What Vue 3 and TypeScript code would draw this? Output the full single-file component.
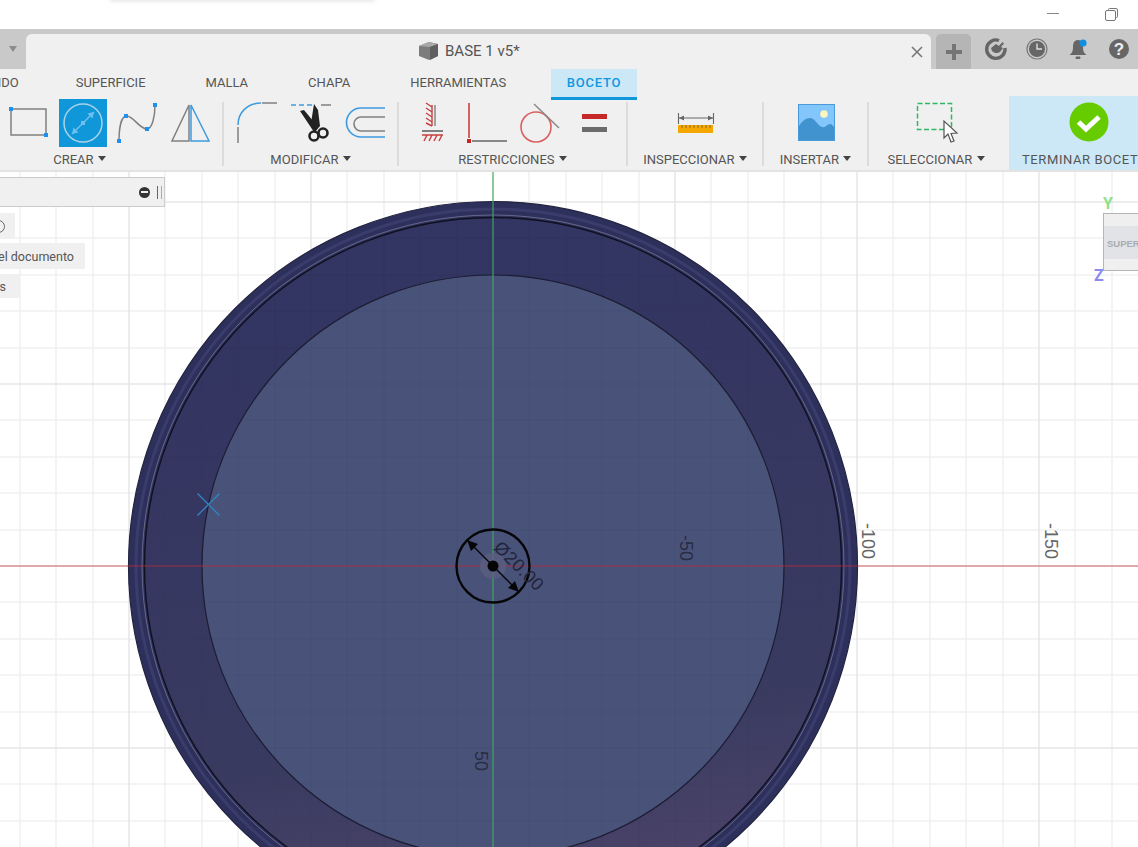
<template>
  <div class="app">
    <header class="titlebar">
      <div class="shadow"></div>
      <div class="win-min"></div>
      <svg class="win-restore" width="13" height="13" viewBox="0 0 13 13">
        <path d="M3.5 2.5 V1.5 a1 1 0 0 1 1-1 H11 a1.5 1.5 0 0 1 1.5 1.5 V8.5 a1 1 0 0 1-1 1 H10.5" fill="none" stroke="#777" />
        <rect x="0.5" y="2.5" width="10" height="10" rx="1.5" fill="#fff" stroke="#777" />
      </svg>
    </header>

    <div class="tabbar">
      <div class="tab-left"><span class="tri"></span></div>
      <div class="doc-tab">
        <svg class="cube" width="20" height="20" viewBox="0 0 20 20">
          <path d="M1 5 L11 1 L20 3 V15 L11 19 L1 15 Z" fill="#7d7d7d" />
          <path d="M1 5 L11 1 L20 3 L12 6 Z" fill="#a8a8a8" />
          <path d="M12 6 L20 3 V15 L12 19 Z" fill="#5f5f5f" />
        </svg>
        <span class="doc-name">BASE 1 v5*</span>
        <svg class="close" width="12" height="12" viewBox="0 0 12 12">
          <path d="M1 1 L11 11 M11 1 L1 11" stroke="#777" stroke-width="1.6" />
        </svg>
      </div>
      <div class="plus">
        <svg width="18" height="18" viewBox="0 0 18 18">
          <path d="M9 1 V17 M1 9 H17" stroke="#757575" stroke-width="4" />
        </svg>
      </div>
      <div class="status-icons">
        <svg width="24" height="24" viewBox="0 0 24 24">
          <path d="M15 3.5 A9.2 9.2 0 1 0 21 11" fill="none" stroke="#666" stroke-width="3.4" />
          <path d="M7 11 L12 7 L15 9 L18.5 5 L20 6.5 L17 10 L19 11 L16 15 C13 17 10 16 8 14 Z" fill="#666" />
        </svg>
        <svg width="24" height="24" viewBox="0 0 24 24">
          <circle cx="12" cy="12" r="10" fill="none" stroke="#777" stroke-width="1.2" />
          <circle cx="12" cy="12" r="8" fill="#666" />
          <path d="M12 6.5 V12 H17" fill="none" stroke="#ddd" stroke-width="1.4" />
        </svg>
        <svg width="24" height="24" viewBox="0 0 24 24">
          <path d="M12 3 C7.5 3 7 7 7 11 C7 14 6 16 3.5 18 H20.5 C18 16 17 14 17 11 C17 7 16.5 3 12 3 Z" fill="#666" />
          <rect x="9.5" y="19.5" width="5" height="2.5" rx="1.2" fill="#666" />
          <circle cx="17" cy="6" r="3.6" fill="#0f8fe0" />
        </svg>
        <svg width="24" height="24" viewBox="0 0 24 24">
          <circle cx="12" cy="12" r="10" fill="#666" />
          <text x="12" y="18" text-anchor="middle" class="help-mark">?</text>
        </svg>
      </div>
    </div>

    <section class="ribbon">
      <nav class="ribbon-tabs">
        <span v-for="t in tabs" :key="t" class="rtab" :class="{ active: t === 'BOCETO' }">{{ t }}</span>
      </nav>
      <div class="tools-row">
        <div class="group g-create">
          <div class="tools tools-start">
            <svg class="tool" viewBox="0 0 48 48"><path d="M8 40 L40 8" stroke="#808080" stroke-width="1.5" /></svg>
            <svg class="tool" viewBox="0 0 48 48">
              <rect x="6" y="10" width="35" height="26" fill="none" stroke="#808080" stroke-width="1.5" />
              <rect x="4" y="8" width="4" height="4" fill="#1e90ee" />
              <rect x="39" y="34" width="4" height="4" fill="#1e90ee" />
            </svg>
            <svg class="tool selected" viewBox="0 0 48 48">
              <circle cx="24" cy="24" r="19" fill="none" stroke="#a9d3e6" stroke-width="1.5" />
              <path d="M13 35 L35 13" stroke="#6fc0ee" stroke-width="1.5" />
              <path d="M35 13 L28.5 14.5 L33.5 19.5 Z M13 35 L19.5 33.5 L14.5 28.5 Z" fill="#6fc0ee" />
              <rect x="22" y="22" width="4" height="4" fill="#6fc0ee" />
            </svg>
            <svg class="tool" viewBox="0 0 48 48">
              <path d="M6 42 C6 30 8 18 13 17 C20 16 26 30 34 30 C39 30 42 18 42 6" fill="none" stroke="#808080" stroke-width="1.5" />
              <rect x="4" y="40" width="4" height="4" fill="#1e90ee" />
              <rect x="11" y="15" width="4" height="4" fill="#1e90ee" />
              <rect x="32" y="28" width="4" height="4" fill="#1e90ee" />
              <rect x="40" y="4" width="4" height="4" fill="#1e90ee" />
            </svg>
            <svg class="tool" viewBox="0 0 48 48">
              <path d="M22 6 L5 42 H22 Z" fill="none" stroke="#808080" stroke-width="1.5" />
              <path d="M24 6 L42 42 H24 Z" fill="none" stroke="#3c9be0" stroke-width="1.5" />
            </svg>
          </div>
          <div class="glabel">CREAR <i class="caret"></i></div>
        </div>
        <div class="sep"></div>

        <div class="group g-modify">
          <div class="tools">
            <svg class="tool" viewBox="0 0 48 48">
              <path d="M5 26 C5 13 15 4 28 4" fill="none" stroke="#3c9be0" stroke-width="1.5" />
              <path d="M5 28 V44 M29 4 H44" stroke="#808080" stroke-width="1.5" />
            </svg>
            <svg class="tool" viewBox="0 0 48 48">
              <path d="M4 6 H28" stroke="#3c9be0" stroke-width="1.5" stroke-dasharray="5 3" />
              <path d="M34 6 H44" stroke="#808080" stroke-width="1.5" />
              <path d="M13 12 L17 11 L31 28 L27 33 Z" fill="#222" />
              <path d="M27 5 L31 11 L33 27 L28 33 L24 24 Z" fill="#222" />
              <circle cx="27" cy="37" r="4.5" fill="none" stroke="#222" stroke-width="2.6" />
              <circle cx="36" cy="34" r="4.5" fill="none" stroke="#222" stroke-width="2.6" />
            </svg>
            <svg class="tool" viewBox="0 0 48 48">
              <path d="M44 9 H20 A14.5 14.5 0 0 0 20 38 H44" fill="none" stroke="#3c9be0" stroke-width="1.6" />
              <path d="M44 18 H20 A7 7 0 0 0 20 32 H44" fill="none" stroke="#808080" stroke-width="1.6" />
            </svg>
          </div>
          <div class="glabel">MODIFICAR <i class="caret"></i></div>
        </div>
        <div class="sep"></div>

        <div class="group g-constraints">
          <div class="tools shift">
            <svg class="tool" viewBox="0 0 48 48">
              <path d="M24 6 V27" stroke="#c7403f" stroke-width="1.4" />
              <path d="M27 6 V27" stroke="#808080" stroke-width="1.4" />
              <path d="M24 8 L18 4 M24 13 L18 9 M24 18 L18 14 M24 23 L18 19 M24 27 L18 24" stroke="#c7403f" stroke-width="1.4" />
              <path d="M14 32 H35" stroke="#808080" stroke-width="2" />
              <path d="M14 36 H35 M19 36 L16 42 M24 36 L21 42 M29 36 L26 42 M34 36 L31 42" stroke="#c7403f" stroke-width="1.4" />
            </svg>
            <svg class="tool" viewBox="0 0 48 48">
              <path d="M7 4 V39" stroke="#c7403f" stroke-width="1.6" />
              <rect x="5" y="40" width="4" height="4" fill="#c7261f" />
              <path d="M10 42 H45" stroke="#888" stroke-width="1.8" />
            </svg>
            <svg class="tool" viewBox="0 0 48 48">
              <circle cx="20" cy="28" r="15" fill="none" stroke="#d9605f" stroke-width="1.6" />
              <path d="M18 5 L43 29" stroke="#888" stroke-width="1.5" />
            </svg>
            <svg class="tool" viewBox="0 0 48 48">
              <rect x="12" y="15" width="25" height="5" fill="#c62828" />
              <rect x="12" y="28" width="25" height="5" fill="#6b6b6b" />
            </svg>
          </div>
          <div class="glabel">RESTRICCIONES <i class="caret"></i></div>
        </div>
        <div class="sep"></div>

        <div class="group g-inspect">
          <div class="tools">
            <svg class="tool" viewBox="0 0 48 48">
              <path d="M7.5 14 V25 M42.5 14 V25 M8 19 H42" stroke="#666" stroke-width="1.1" />
              <path d="M8 19 L13 16.5 V21.5 Z M42 19 L37 16.5 V21.5 Z" fill="#666" />
              <rect x="7" y="26" width="35" height="8" fill="#f5a800" />
              <path d="M11 26 V29 M15 26 V29 M19 26 V29 M23 26 V29 M27 26 V29 M31 26 V29 M35 26 V29 M39 26 V29" stroke="#8a6a20" stroke-width="1" />
            </svg>
          </div>
          <div class="glabel">INSPECCIONAR <i class="caret"></i></div>
        </div>
        <div class="sep"></div>

        <div class="group g-insert">
          <div class="tools shift">
            <svg class="tool" viewBox="0 0 48 48">
              <rect x="6.5" y="5.5" width="36" height="36" fill="#82c6fb" stroke="#4a9ad8" />
              <path d="M7 41 V27 C10 22 14 19 18 19 C23 19 26 27 30 28 C34 29 35 25 38 25 C40 25 41 27 42 28 V41 Z" fill="#4193d0" />
              <circle cx="32" cy="15" r="3.8" fill="#fdf6c0" />
            </svg>
          </div>
          <div class="glabel">INSERTAR <i class="caret"></i></div>
        </div>
        <div class="sep"></div>

        <div class="group g-select">
          <div class="tools">
            <svg class="tool" viewBox="0 0 48 48">
              <rect x="5.5" y="4.5" width="34" height="26" fill="none" stroke="#2eb862" stroke-width="1.5" stroke-dasharray="5 2.5" />
              <path d="M32 22 V39 L36 35 L39 43 L42 42 L39 34.5 L45 34 Z" fill="#fff" stroke="#555" stroke-width="1.2" />
            </svg>
          </div>
          <div class="glabel">SELECCIONAR <i class="caret"></i></div>
        </div>

        <div class="finish">
          <svg class="tool" viewBox="0 0 48 48">
            <circle cx="24" cy="23" r="19.5" fill="#66cc00" />
            <path d="M13.5 23 L21 30 L34 18" fill="none" stroke="#fff" stroke-width="5" />
          </svg>
          <div class="glabel finish-label">TERMINAR BOCETO</div>
        </div>
      </div>
    </section>

    <main class="viewport">
      <svg class="scene" width="1138" height="675" viewBox="0 172 1138 675">
        <defs>
          <linearGradient id="ring" x1="0.35" y1="0.1" x2="0.5" y2="1">
            <stop offset="0" stop-color="#333562" />
            <stop offset="0.7" stop-color="#383a60" />
            <stop offset="0.95" stop-color="#4a4268" />
          </linearGradient>
          <clipPath id="part">
            <circle cx="493" cy="566" r="348" />
          </clipPath>
        </defs>
        <path v-for="x in minorX" :key="'x' + x" :d="`M${x} 172 V847`" class="grid" />
        <path v-for="y in minorY" :key="'y' + y" :d="`M0 ${y} H1138`" class="grid" />
        <path v-for="x in majorX" :key="'X' + x" :d="`M${x} 172 V847`" class="grid major" />
        <path v-for="y in majorY" :key="'Y' + y" :d="`M0 ${y} H1138`" class="grid major" />

        <circle cx="493" cy="566" r="364.5" fill="#2e305c" stroke="#22233f" stroke-width="1.2" />
        <circle cx="493" cy="566" r="357" fill="none" stroke="#3a3c6c" stroke-width="3" />
        <circle cx="493" cy="566" r="351" fill="none" stroke="#8a8ca8" stroke-opacity="0.6" stroke-width="1" />
        <circle cx="493" cy="566" r="348.5" fill="url(#ring)" stroke="#10111f" stroke-width="1.4" />
        <circle cx="493" cy="566" r="291" fill="#495379" stroke="#1c1d33" stroke-width="1.2" />

        <g clip-path="url(#part)">
          <path v-for="x in allX" :key="'cx' + x" :d="`M${x} 172 V847`" class="through" />
          <path v-for="y in allY" :key="'cy' + y" :d="`M0 ${y} H1138`" class="through" />
        </g>

        <path d="M493 172 V847" stroke="#3fae62" stroke-opacity="0.75" stroke-width="1.5" />
        <path d="M0 566 H1138" stroke="#d02838" stroke-opacity="0.7" stroke-width="1" />

        <path d="M197.5 493.5 L219.5 515.5 M219.5 493.5 L197.5 515.5" stroke="#2f86c4" stroke-width="1.3" />

        <circle cx="493" cy="566" r="13" fill="#5b5f80" opacity="0.8" />
        <circle cx="493" cy="566" r="5.5" fill="#050505" />
        <circle cx="493" cy="566" r="36.5" fill="none" stroke="#060608" stroke-width="2.4" />
        <path d="M467 540 L519 592" stroke="#060608" stroke-width="1.3" />
        <path d="M467 540 L471 551 L478 544 Z M519 592 L515 581 L508 588 Z" fill="#060608" />
        <text x="518" y="567" class="dim" transform="rotate(45 518 567)" text-anchor="middle" dominant-baseline="middle">Ø20.00</text>

        <text v-for="l in axisLabels" :key="l.text" :x="l.x" :y="l.y" class="axis" :class="{ 'on-part': l.onPart }" text-anchor="middle" dominant-baseline="middle" :transform="`rotate(90 ${l.x} ${l.y})`">{{ l.text }}</text>
      </svg>

      <div class="browser">
        <div class="browser-head">
          <span class="minus"></span>
          <span class="grip"></span>
        </div>
        <div class="chip chip-a"><span class="ring"></span></div>
        <div class="chip chip-b"><span>Unidades del documento</span></div>
        <div class="chip chip-c"><span>Vistas</span></div>
      </div>

      <div class="viewcube">
        <span class="axis-y">Y</span>
        <span class="axis-z">Z</span>
        <div class="cube-face"><span>SUPERIOR</span></div>
      </div>
    </main>
  </div>
</template>

<script setup lang="ts">
const tabs: string[] = ['SÓLIDO', 'SUPERFICIE', 'MALLA', 'CHAPA', 'HERRAMIENTAS', 'BOCETO']

const CX = 493
const CY = 566
const STEP = 36.4

function lines(center: number, from: number, to: number, major: boolean | null): number[] {
  const out: number[] = []
  for (let k = -40; k <= 40; k++) {
    const v = Math.round(center + k * STEP)
    if (v < from || v > to) continue
    if (major === null || (k % 5 === 0) === major) out.push(v)
  }
  return out
}

const minorX = lines(CX, 0, 1138, false)
const minorY = lines(CY, 172, 847, false)
const majorX = lines(CX, 0, 1138, true)
const majorY = lines(CY, 172, 847, true)
const allX = lines(CX, 0, 1138, null)
const allY = lines(CY, 172, 847, null)

const axisLabels = [
  { text: '-50', x: 685, y: 548, onPart: true },
  { text: '-100', x: 867, y: 541, onPart: false },
  { text: '-150', x: 1050, y: 541, onPart: false },
  { text: '50', x: 480, y: 761, onPart: true },
]
</script>

<style>
html,
body {
  margin: 0;
  overflow: hidden;
  background: #fff;
}
</style>

<style scoped>
.app {
  width: 1138px;
  height: 847px;
  display: flex;
  flex-direction: column;
  overflow: hidden;
  font-family: Roboto, 'Liberation Sans', Arial, sans-serif;
  color: #555;
}

.titlebar {
  position: relative;
  height: 29px;
  flex: none;
  background: #fff;
}
.shadow {
  position: absolute;
  left: 110px;
  top: -6px;
  width: 265px;
  height: 6px;
  box-shadow: 0 1px 5px rgba(0, 0, 0, 0.12);
}
.win-min {
  position: absolute;
  left: 1047px;
  top: 13px;
  width: 12px;
  height: 1px;
  background: #888;
}
.win-restore {
  position: absolute;
  left: 1105px;
  top: 8px;
}

.tabbar {
  height: 40px;
  flex: none;
  display: flex;
  background: #c9c9c9;
}
.tab-left {
  width: 26px;
  display: flex;
  align-items: center;
  justify-content: flex-end;
  padding-right: 9px;
  box-sizing: border-box;
}
.tri {
  width: 0;
  height: 0;
  border-left: 4px solid transparent;
  border-right: 4px solid transparent;
  border-top: 6px solid #8c8c8c;
}
.doc-tab {
  width: 905px;
  margin-top: 5px;
  padding-left: 392px;
  box-sizing: border-box;
  display: flex;
  align-items: center;
  background: #f0f0f0;
  border-radius: 6px 6px 0 0;
}
.cube {
  margin-right: 7px;
  margin-top: -1px;
}
.doc-name {
  font-size: 15px;
  color: #555;
  margin-top: -1px;
}
.close {
  margin-left: auto;
  margin-right: 8px;
}
.plus {
  width: 35px;
  margin: 5px 0 0 5px;
  display: flex;
  align-items: center;
  justify-content: center;
  background: #b5b5b5;
  border-radius: 5px 5px 0 0;
}
.status-icons {
  display: flex;
  gap: 17px;
  margin: 8px 0 0 13px;
}
.help-mark {
  font: bold 17px 'Liberation Sans', Arial, sans-serif;
  fill: #eee;
}

.ribbon {
  flex: none;
  height: 103px;
  background: #f0f0f0;
  border-bottom: 2px solid #e3e3e3;
  box-sizing: border-box;
  overflow: hidden;
}
.ribbon-tabs {
  height: 30px;
  display: flex;
  gap: 30px;
  margin-left: -41px;
  font-size: 13px;
}
.rtab {
  position: relative;
  z-index: 1;
  height: 31px;
  box-sizing: border-box;
  padding: 0 15px;
  line-height: 28px;
  white-space: nowrap;
}
.rtab:first-child {
  margin-right: -3px;
}
.rtab.active {
  padding: 0 15.5px;
  background: #cce8f6;
  color: #0f97e0;
  font-weight: 500;
  letter-spacing: 0.8px;
  border-bottom: 3px solid #0f97d9;
}
.tools-row {
  display: flex;
  margin-left: -63px;
  height: 71px;
}
.group {
  flex: none;
  display: flex;
  flex-direction: column;
}
.g-create { width: 285px; }
.g-modify { width: 173px; }
.g-constraints { width: 227px; }
.g-inspect { width: 134px; }
.g-insert { width: 103px; }
.g-select { width: 134px; }
.tools {
  display: flex;
  gap: 6px;
  justify-content: center;
}
.tools-start {
  justify-content: flex-start;
  padding-left: 14px;
}
.shift {
  padding-left: 1px;
}
.tool {
  flex: none;
  display: block;
  width: 48px;
  height: 48px;
}
.selected {
  background: #0f97d9;
}
.glabel {
  margin-top: 6px;
  height: 14px;
  line-height: 14px;
  font-size: 13px;
  text-align: center;
  white-space: nowrap;
}
.caret {
  display: inline-block;
  width: 0;
  height: 0;
  margin-left: 1px;
  vertical-align: 3px;
  border-left: 4px solid transparent;
  border-right: 4px solid transparent;
  border-top: 5px solid #444;
}
.sep {
  flex: none;
  width: 2px;
  height: 64px;
  margin-top: 3px;
  background: #dcdcdc;
}
.finish {
  flex: none;
  width: 160px;
  height: 74px;
  margin: -3px 0 0 6px;
  padding-top: 3px;
  box-sizing: border-box;
  background: #cce8f6;
  display: flex;
  flex-direction: column;
  align-items: center;
}
.finish-label {
  align-self: flex-start;
  margin-left: 13px;
  letter-spacing: 0.6px;
}

.viewport {
  position: relative;
  flex: 1;
  background: #fff;
  overflow: hidden;
}
.scene {
  display: block;
}
.grid {
  stroke: #f1f1f1;
  stroke-width: 1.5;
}
.major {
  stroke: #e6e6e6;
}
.through {
  stroke: #000;
  stroke-opacity: 0.035;
  stroke-width: 1;
}
.dim {
  font: 18px 'Liberation Sans', Arial, sans-serif;
  fill: #23233a;
  letter-spacing: 0.5px;
}
.axis {
  font: 18px 'Liberation Sans', Arial, sans-serif;
  fill: #666;
}
.on-part {
  fill: #2a2c44;
}

.browser {
  position: absolute;
  left: 0;
  top: 5px;
  width: 165px;
  font-size: 12.5px;
  color: #555;
}
.browser-head {
  height: 30px;
  box-sizing: border-box;
  background: #f0f0f0;
  border: 1px solid #cbcbcb;
  border-left: none;
  display: flex;
  align-items: center;
  justify-content: flex-end;
}
.minus {
  position: relative;
  width: 11px;
  height: 11px;
  border-radius: 50%;
  background: #333;
  margin-right: 7px;
}
.minus::after {
  content: '';
  position: absolute;
  left: 2px;
  top: 4.5px;
  width: 7px;
  height: 2px;
  background: #f0f0f0;
}
.grip {
  width: 3px;
  height: 13px;
  margin-right: 2px;
  border-left: 1px solid #666;
  border-right: 1px solid #aaa;
}
.chip {
  display: flex;
  align-items: center;
  justify-content: flex-end;
  background: #f0f0f0;
  white-space: nowrap;
  overflow: hidden;
}
.chip-a {
  width: 15px;
  height: 26px;
  margin-top: 6px;
}
.ring {
  flex: none;
  width: 11px;
  height: 11px;
  margin-right: 10px;
  border: 1.5px solid #666;
  border-radius: 50%;
}
.chip-b {
  width: 85px;
  height: 26px;
  margin-top: 4px;
  padding-right: 11px;
  box-sizing: border-box;
}
.chip-c {
  width: 20px;
  height: 24px;
  margin-top: 5px;
  padding-right: 14px;
  box-sizing: border-box;
}

.viewcube {
  position: absolute;
  left: 1103px;
  top: 41px;
  width: 60px;
  height: 58px;
}
.cube-face {
  width: 100%;
  height: 100%;
  box-sizing: border-box;
  padding: 12px 0 11px 8px;
  background: #efefef;
  border: 1.5px solid #b5b5b5;
}
.cube-face span {
  display: block;
  height: 100%;
  background: #e2e3e6;
  font: bold 9.5px/35px 'Liberation Sans', Arial, sans-serif;
  color: #a8acb4;
  white-space: nowrap;
  padding-left: 3px;
  margin-left: -8px;
}
.axis-y,
.axis-z {
  position: absolute;
  font-size: 16px;
  line-height: 16px;
  font-weight: bold;
}
.axis-y {
  left: 0;
  top: -17px;
  color: #8fe08f;
}
.axis-z {
  left: -9px;
  top: 55px;
  color: #8a8af0;
}
</style>
